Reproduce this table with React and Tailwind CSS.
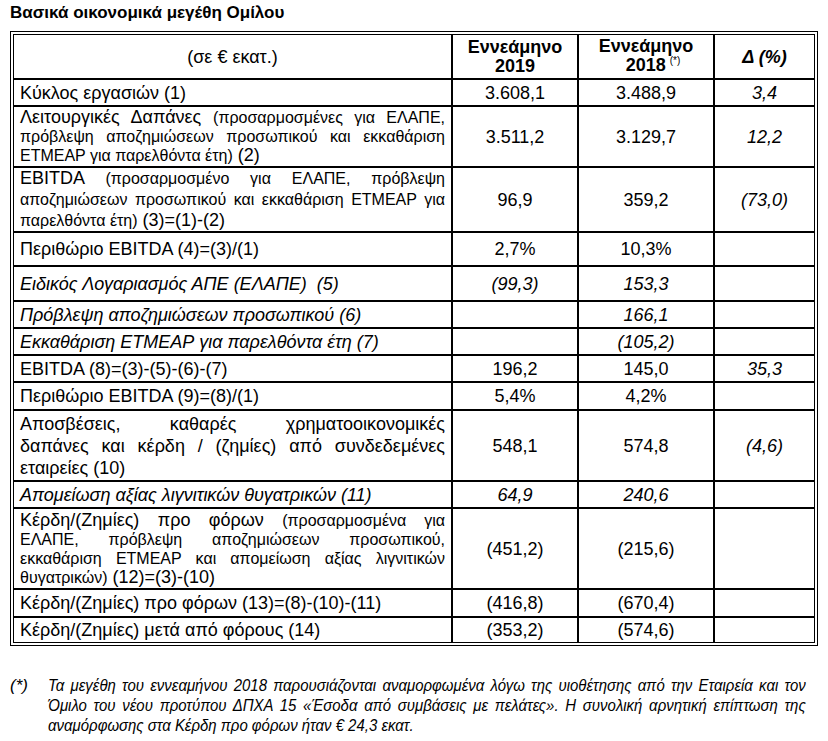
const font = "font-['Liberation_Sans','Noto_Sans',Arial,sans-serif]";

// one justified line; the last line of a paragraph stays left aligned
function L({ children, last }) {
  return (
    <div className={last ? 'whitespace-nowrap text-left' : 'whitespace-nowrap text-justify [text-align-last:justify]'}>
      {children}
    </div>
  );
}

const S = ({ children }) => <span className="text-[16px]">{children}</span>;

const rows = [
  { h: 'h-[27px]', label: 'Κύκλος εργασιών (1)', a: '3.608,1', b: '3.488,9', d: '3,4' },
  {
    h: 'h-[61px]',
    lh: 'leading-[18px]',
    label: (
      <>
        <L>
          Λειτουργικές Δαπάνες <S>(προσαρμοσμένες για ΕΛΑΠΕ,</S>
        </L>
        <L>
          <S>πρόβλεψη αποζημιώσεων προσωπικού και εκκαθάριση</S>
        </L>
        <L last>
          <S>ΕΤΜΕΑΡ για παρελθόντα έτη)</S> (2)
        </L>
      </>
    ),
    a: '3.511,2',
    b: '3.129,7',
    d: '12,2',
  },
  {
    h: 'h-[65px]',
    lh: 'leading-[20px]',
    label: (
      <>
        <L>
          EBITDA <S>(προσαρμοσμένο για ΕΛΑΠΕ, πρόβλεψη</S>
        </L>
        <L>
          <S>αποζημιώσεων προσωπικού και εκκαθάριση ΕΤΜΕΑΡ για</S>
        </L>
        <L last>
          <S>παρελθόντα έτη)</S> (3)=(1)-(2)
        </L>
      </>
    ),
    a: '96,9',
    b: '359,2',
    d: '(73,0)',
  },
  { h: 'h-[34px]', label: 'Περιθώριο EBITDA (4)=(3)/(1)', a: '2,7%', b: '10,3%', d: '' },
  { h: 'h-[35px]', it: true, label: 'Ειδικός Λογαριασμός ΑΠΕ (ΕΛΑΠΕ)\u00a0 (5)', a: '(99,3)', b: '153,3', d: '' },
  { h: 'h-[27px]', it: true, label: 'Πρόβλεψη αποζημιώσεων προσωπικού (6)', a: '', b: '166,1', d: '' },
  { h: 'h-[27px]', it: true, label: 'Εκκαθάριση ΕΤΜΕΑΡ για παρελθόντα έτη (7)', a: '', b: '(105,2)', d: '' },
  { h: 'h-[27px]', label: 'EBITDA (8)=(3)-(5)-(6)-(7)', a: '196,2', b: '145,0', d: '35,3' },
  { h: 'h-[28px]', label: 'Περιθώριο EBITDA (9)=(8)/(1)', a: '5,4%', b: '4,2%', d: '' },
  {
    h: 'h-[71px]',
    lh: 'leading-[22px]',
    label: (
      <>
        <L>Αποσβέσεις, καθαρές χρηματοοικονομικές</L>
        <L>δαπάνες και κέρδη / (ζημίες) από συνδεδεμένες</L>
        <L last>εταιρείες (10)</L>
      </>
    ),
    a: '548,1',
    b: '574,8',
    d: '(4,6)',
  },
  { h: 'h-[27px]', it: true, label: 'Απομείωση αξίας λιγνιτικών θυγατρικών (11)', a: '64,9', b: '240,6', d: '' },
  {
    h: 'h-[81px]',
    lh: 'leading-[19px]',
    label: (
      <>
        <L>
          Κέρδη/(Ζημίες) προ φόρων <S>(προσαρμοσμένα για</S>
        </L>
        <L>
          <S>ΕΛΑΠΕ, πρόβλεψη αποζημιώσεων προσωπικού,</S>
        </L>
        <L>
          <S>εκκαθάριση ΕΤΜΕΑΡ και απομείωση αξίας λιγνιτικών</S>
        </L>
        <L last>
          <S>θυγατρικών)</S> (12)=(3)-(10)
        </L>
      </>
    ),
    a: '(451,2)',
    b: '(215,6)',
    d: '',
  },
  { h: 'h-[28px]', label: 'Κέρδη/(Ζημίες) προ φόρων (13)=(8)-(10)-(11)', a: '(416,8)', b: '(670,4)', d: '' },
  { h: 'h-[26px]', label: 'Κέρδη/(Ζημίες) μετά από φόρους (14)', a: '(353,2)', b: '(574,6)', d: '' },
];

const grid = 'grid grid-cols-[437px_126px_136px_101px]';

function Row({ r }) {
  return (
    <div className={`${grid} ${r.h} border-t-2 border-black`}>
      <div className={`flex flex-col justify-center px-[6px] ${r.lh || ''} ${r.it ? 'italic' : ''}`}>
        {r.label}
      </div>
      <div className={`flex items-center justify-center border-l-2 border-black ${r.it ? 'italic' : ''}`}>{r.a}</div>
      <div className={`flex items-center justify-center border-l-2 border-black ${r.it ? 'italic' : ''}`}>{r.b}</div>
      <div className="flex items-center justify-center border-l-2 border-black italic">{r.d}</div>
    </div>
  );
}

export default function App() {
  return (
    <div className={`${font} min-h-[741px] w-[828px] overflow-hidden bg-white pl-[10px] pt-[3px] text-[18px] leading-[20px] text-black`}>
      <h1 className="text-[17px] font-bold leading-[20px]">Βασικά οικονομικά μεγέθη Ομίλου</h1>

      {/* table with a double outer frame */}
      <div className="mt-[8px] w-[808px] border border-black p-[2px]">
        <div className="border border-black">
          <div className={`${grid} h-[43px]`}>
            <div className="flex items-center justify-center">(σε € εκατ.)</div>
            <div className="flex flex-col items-center justify-center border-l-2 border-black font-bold leading-[19px]">
              <span>Εννεάμηνο</span>
              <span>2019</span>
            </div>
            <div className="flex flex-col items-center justify-center border-l-2 border-black font-bold leading-[19px]">
              <span>Εννεάμηνο</span>
              <span className="pl-[14px]">
                2018<span className="relative -top-[7px] ml-[4px] text-[10px] font-normal">(*)</span>
              </span>
            </div>
            <div className="flex items-center justify-center border-l-2 border-black font-bold italic">Δ (%)</div>
          </div>
          {rows.map((r, i) => (
            <Row key={i} r={r} />
          ))}
        </div>
      </div>

      {/* footnote */}
      <div className="mt-[30px] flex text-[17px] italic leading-[20px]">
        <div className="w-[38px] shrink-0">(*)</div>
        <div className="w-[758px] shrink-0">
          <div className="w-[861px] origin-left scale-x-[0.88]">
            <L>
              Τα μεγέθη του εννεαμήνου 2018 παρουσιάζονται αναμορφωμένα λόγω της υιοθέτησης από την Εταιρεία και τον
            </L>
            <L>
              Όμιλο του νέου προτύπου ΔΠΧΑ 15 «Έσοδα από συμβάσεις με πελάτες». Η συνολική αρνητική επίπτωση της
            </L>
            <L last>αναμόρφωσης στα Κέρδη προ φόρων ήταν € 24,3 εκατ.</L>
          </div>
        </div>
      </div>
    </div>
  );
}
